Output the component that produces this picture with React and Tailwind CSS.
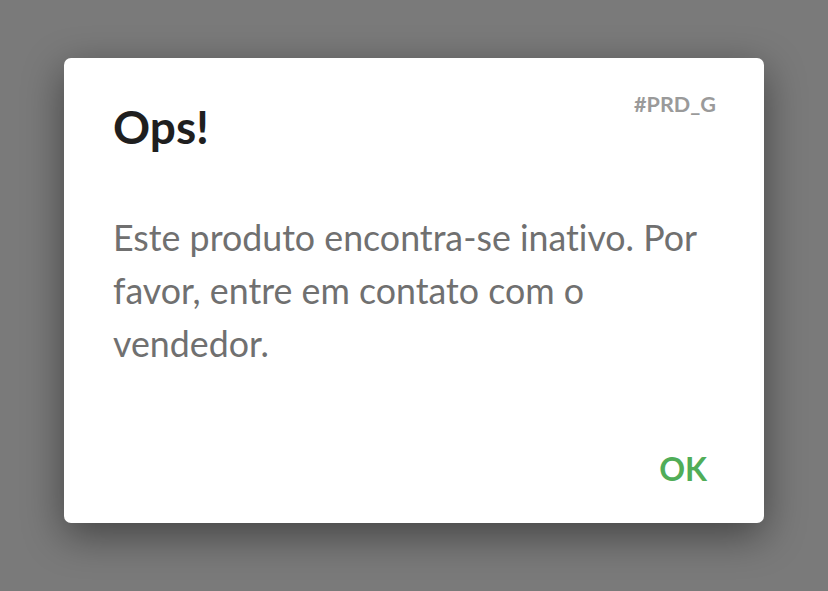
export default function App() {
  return (
    <div
      className="w-[828px] h-[591px] bg-[#7a7a7a] flex justify-center pt-[58px] [font-variant-ligatures:none]"
      style={{ fontFamily: "Lato, 'Noto Sans', sans-serif" }}
    >
      <div className="w-[700px] h-[465px] bg-white rounded-[7px] shadow-[0_12px_40px_rgba(0,0,0,0.45)] flex flex-col pl-[49px] pr-[48px] pt-[34px] pb-[35px]">
        <div className="flex justify-between items-start">
          <h1 className="mt-[7px] text-[46px] leading-[1.2] font-bold text-[#1f1f1f]">Ops!</h1>
          <span className="text-[21.6px] leading-[1.2] font-bold text-[#9a9a9a]">#PRD_G</span>
        </div>
        <p className="mt-[57px] text-[35.75px] leading-[53px] text-[#707070]">
          Este produto encontra-se inativo. Por favor, entre em contato com o vendedor.
        </p>
        <div className="mt-auto flex justify-end">
          <button className="mr-[9px] text-[32px] leading-[1.2] font-bold text-[#50ad58]">OK</button>
        </div>
      </div>
    </div>
  );
}
